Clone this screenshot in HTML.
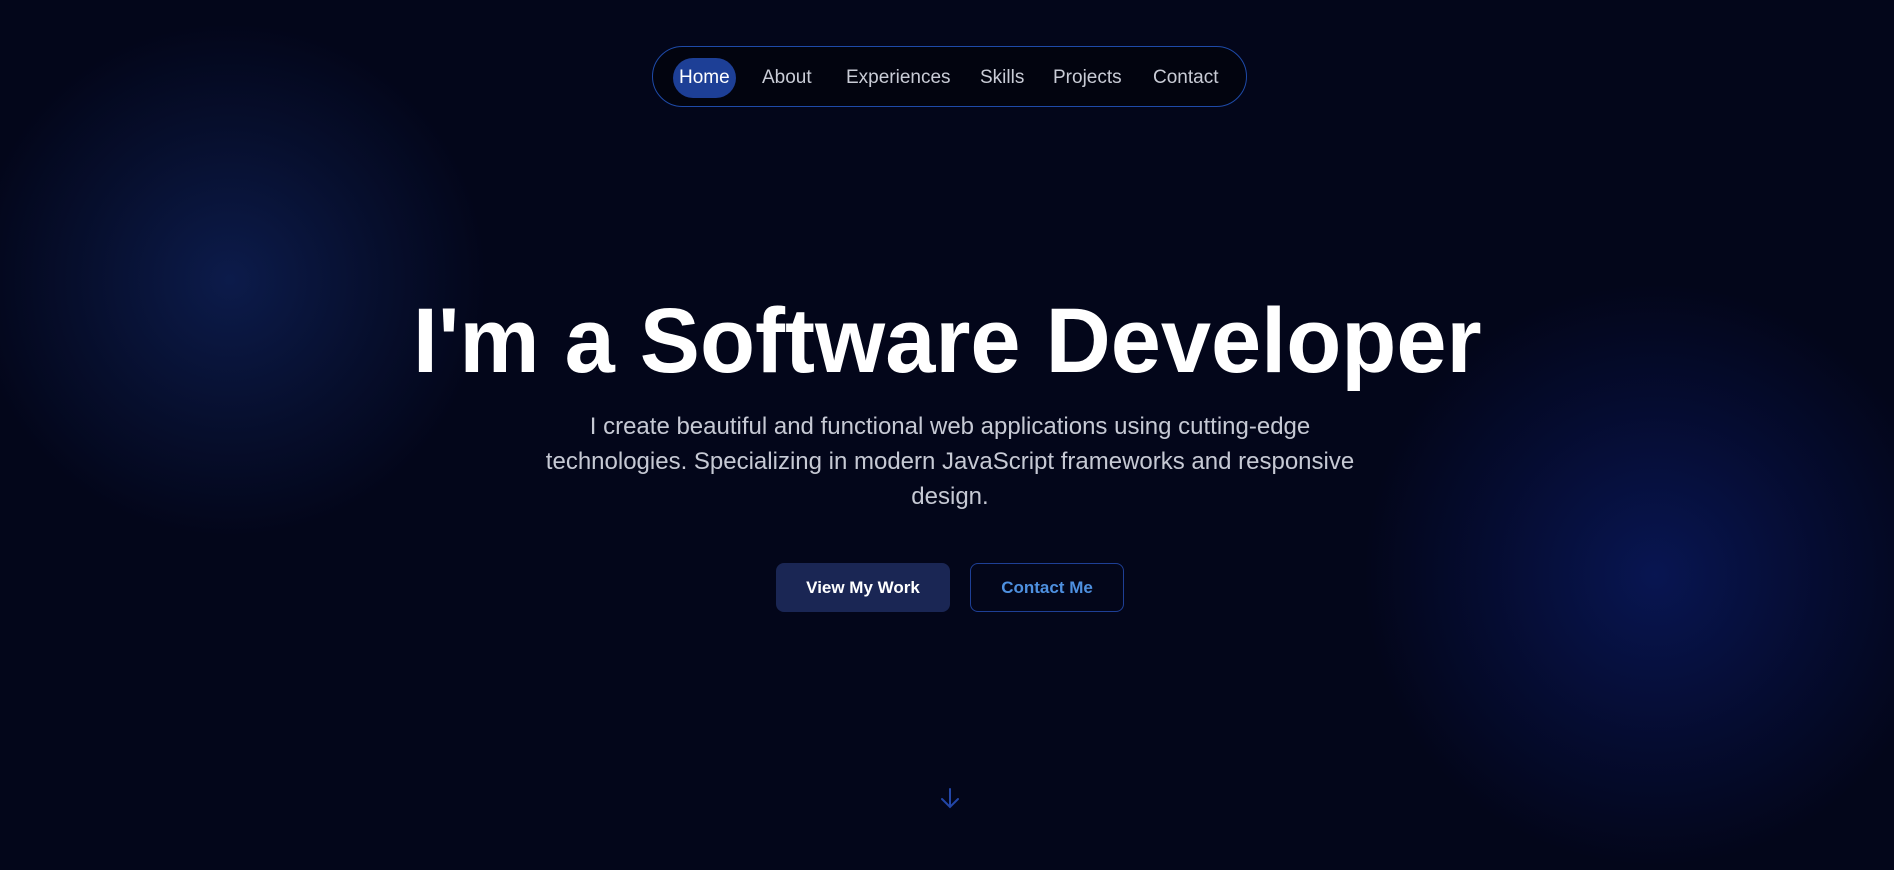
<!DOCTYPE html>
<html><head><meta charset="utf-8"><style>
html,body{margin:0;width:1894px;height:857px;overflow:hidden;background:#03061a;font-family:"Liberation Sans",sans-serif;}
.g1{position:absolute;left:-30px;top:20px;width:520px;height:520px;border-radius:50%;background:radial-gradient(circle,rgba(16,36,95,.7) 0%,rgba(12,28,75,.4) 40%,rgba(3,6,26,0) 70%);}
.g2{position:absolute;left:1360px;top:280px;width:590px;height:590px;border-radius:50%;background:radial-gradient(circle,rgba(10,28,105,.7) 0%,rgba(8,20,80,.42) 40%,rgba(3,6,26,0) 70%);}
nav{position:absolute;left:652px;top:46px;width:593px;height:59px;border:1px solid #1e4aa8;border-radius:31px;background:#02040f;}
nav a{position:absolute;top:11px;height:40px;line-height:40px;color:#c9ccd6;font-size:19px;}
nav a.h{background:#1d3f96;color:#fff;border-radius:20px;padding:0 6px;}
h1{position:absolute;left:0;width:1894px;top:286px;margin:0;text-align:center;color:#fff;font-size:92px;font-weight:bold;line-height:110px;}
h1 span{display:inline-block;transform:scaleX(.98);}
p{position:absolute;left:530px;width:840px;top:409px;margin:0;text-align:center;color:#c6c9d4;font-size:24px;line-height:35px;}
.b{position:absolute;top:563px;height:49px;line-height:49px;border-radius:8px;text-align:center;font-size:17px;font-weight:bold;}
.b1{left:776px;width:174px;background:#1a2654;color:#fff;}
.b2{left:970px;width:152px;height:47px;line-height:47px;border:1px solid #1e3f96;color:#4e90e0;}
</style></head><body>
<div class="g1"></div><div class="g2"></div>
<nav>
<a class="h" style="left:20px">Home</a>
<a style="left:109px">About</a>
<a style="left:193px">Experiences</a>
<a style="left:327px">Skills</a>
<a style="left:400px">Projects</a>
<a style="left:500px">Contact</a>
</nav>
<h1><span>I'm a Software Developer</span></h1>
<p>I create beautiful and functional web applications using cutting-edge technologies. Specializing in modern JavaScript frameworks and responsive design.</p>
<div class="b b1">View My Work</div>
<div class="b b2">Contact Me</div>
<svg style="position:absolute;left:938px;top:786px" width="24" height="24" viewBox="0 0 24 24" fill="none" stroke="#2346a8" stroke-width="2" stroke-linecap="round"><path d="M12 3v18M4 13l8 8 8-8"/></svg>
</body></html>
